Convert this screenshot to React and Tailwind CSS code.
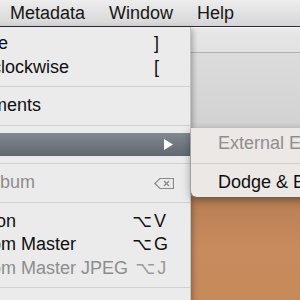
import React from "react";

const FONT = "font-['Lucida_Grande','Liberation_Sans','DejaVu_Sans',sans-serif]";

function Sep() {
  return (
    <div className="h-[15px] flex items-center">
      <div className="h-px w-full bg-[#d0d0d0]" />
    </div>
  );
}

function Row({ label, mod, keyChar, disabled, pad = "pl-[24px]", children }) {
  return (
    <div className="flex items-center h-[23.5px] leading-[23.5px]">
      <div className={`${pad} flex-1 whitespace-nowrap ${disabled ? "text-[#8d8d8d]" : "text-[#0f0f0f]"}`}>{label}</div>
      <div className={`w-[30px] text-right whitespace-nowrap font-['DejaVu_Sans',sans-serif] text-[17px] ${disabled ? "text-[#9a9a9a]" : "text-[#0f0f0f]"}`}>{mod}</div>
      <div className={`w-[38px] pl-[2px] whitespace-nowrap ${disabled ? "text-[#9a9a9a]" : "text-[#0f0f0f]"}`}>
        {keyChar}
        {children}
      </div>
    </div>
  );
}

export default function App() {
  return (
    <div className={`relative w-[300px] h-[300px] overflow-hidden ${FONT} text-[18px]`}>
      {/* Menu bar */}
      <div className="h-[26px] bg-gradient-to-b from-[#ededed] to-[#d6d6d6] flex items-center pl-[10px] gap-[24px] leading-[26px] text-[#161616]">
        <span>Metadata</span>
        <span>Window</span>
        <span>Help</span>
      </div>
      <div className="h-px bg-[#2e2934]" />
      {/* Background window */}
      <div className="flex flex-col h-[273px]">
        <div className="h-px bg-[#f7f7f7]" />
        <div className="h-[24px] bg-gradient-to-b from-[#e8e8e8] to-[#e1e1e1]" />
        <div className="h-px bg-[#b2b2b2]" />
        <div className="h-[143px] bg-gradient-to-b from-[#dcdcdc] via-[#d2d2d2] to-[#bdbdbd]" />
        <div className="flex-1 bg-gradient-to-b from-[#b87e54] via-[#c88b5d] to-[#c6895a]" />
      </div>

      {/* Main menu */}
      <div className="absolute top-[27px] left-[-151px] w-[342px] bg-[#ebebeb] pt-[5px] pb-[6px] shadow-[1px_2px_6px_rgba(0,0,0,0.35)] border-r border-[#c4c4c4]">
        <Row label="Rotate Clockwise" keyChar="]" pad="pl-[20px]" />
        <Row label="Rotate Counterclockwise" keyChar="[" pad="pl-[21px]" />
        <Sep />
        <Row label="Remove Adjustments" pad="pl-[22px]" />
        <Sep />
        <div className="flex items-center h-[23.5px] bg-gradient-to-b from-[#838990] to-[#60676f]">
          <div className="flex-1" />
          <div className="w-[30px]" />
          <div className="w-[38px] pl-[12px]">
            <svg width="9" height="11" viewBox="0 0 9 11">
              <path d="M0 0 L9 5.5 L0 11 Z" fill="#ffffff" />
            </svg>
          </div>
        </div>
        <Sep />
        <Row label="Remove from Album" disabled pad="pl-[23px]">
          <svg width="20" height="11" viewBox="0 0 20 11" className="inline-block align-[-1px]">
            <path d="M6 0.5 H19.5 V10.5 H6 L0.8 5.5 Z" fill="none" stroke="#8a8a8a" strokeWidth="1.2" />
            <path d="M10 3 L15 8 M15 3 L10 8" stroke="#8a8a8a" strokeWidth="1.4" />
          </svg>
        </Row>
        <Sep />
        <Row label="Duplicate Version" mod="⌥" keyChar="V" pad="pl-[27px]" />
        <Row label="New Version from Master" mod="⌥" keyChar="G" pad="pl-[25px]" />
        <Row label="New Version from Master JPEG" mod="⌥" keyChar="J" disabled pad="pl-[25px]" />
        <Sep />
        <Row label="Show in Library" pad="pl-[25px]" />
      </div>

      {/* Submenu */}
      <div className="absolute top-[128px] left-[191px] w-[160px] bg-[#ebe8e5] pt-[4px] pb-[3px] rounded-bl-[6px] shadow-[0_3px_9px_rgba(0,0,0,0.4)]">
        <div className="h-[23.5px] leading-[23.5px] pl-[27px] whitespace-nowrap text-[#8f8f8f]">External Editor</div>
        <div className="h-[15px] flex items-center">
          <div className="h-px w-full bg-[#d3d1ce]" />
        </div>
        <div className="h-[23.5px] leading-[23.5px] pl-[27px] whitespace-nowrap text-[#0f0f0f]">Dodge &amp; Burn</div>
      </div>
    </div>
  );
}
